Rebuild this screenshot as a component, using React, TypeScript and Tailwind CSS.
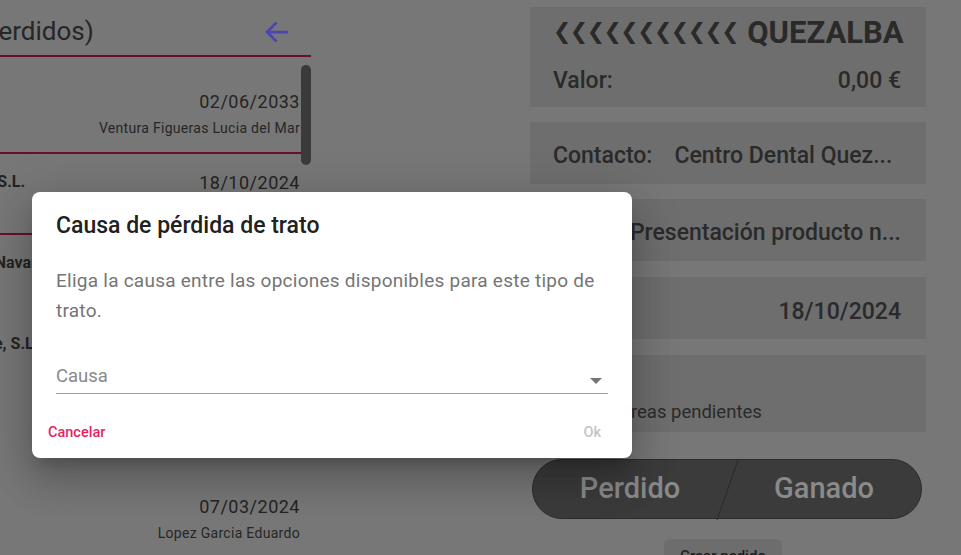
import React from "react";

type Deal = {
  name: string;
  date: string;
  contact: string;
  divider: boolean;
};

const deals: Deal[] = [
  { name: "", date: "02/06/2033", contact: "Ventura Figueras Lucia del Mar", divider: true },
  { name: "Clinica Dental Roca S.L.", date: "18/10/2024", contact: "Martinez Pons Andres", divider: true },
  { name: "Suministros Dental Navarro", date: "21/05/2024", contact: "Navarro Vidal Jorge", divider: false },
  { name: "Ortodoncias Levante, S.L.", date: "12/04/2024", contact: "Ruiz Soler Marta", divider: false },
  { name: "", date: "28/03/2024", contact: "Sanchez Gil Pedro", divider: false },
  { name: "", date: "07/03/2024", contact: "Lopez Garcia Eduardo", divider: false },
];

function DealRow({ deal }: { deal: Deal }) {
  return (
    <div
      className={`h-[81px] pt-4 pr-[11px] pl-[54px] ${
        deal.divider ? "border-b-2 border-[#6a0f2b]" : ""
      }`}
    >
      <div className="flex h-6 items-center justify-between">
        <span className="whitespace-nowrap text-[16px] font-bold text-[#242424]">{deal.name}</span>
        <span className="text-[18px] tracking-[0.5px] text-[#242424]">{deal.date}</span>
      </div>
      <div className="mt-[5px] flex h-5 items-center justify-end">
        <span className="text-[14px] tracking-[0.3px] text-[#262626]">{deal.contact}</span>
      </div>
    </div>
  );
}

export default function App() {
  return (
    <div className="relative h-[555px] w-[961px] overflow-hidden bg-[#777777] font-['Roboto',sans-serif]">
      <div className="flex">
        {/* Lista de tratos */}
        <div className="-ml-[200px] w-[511px] shrink-0">
          <div className="flex h-[57px] items-center justify-between border-b-2 border-[#6a0f2b] pt-[8px] pr-[19px] pl-[95px]">
            <span className="text-[26px] text-[#262626]">Tratos (perdidos)</span>
            <svg width="30" height="30" viewBox="0 0 24 24" fill="none" stroke="#4b45b4" strokeWidth="2.2" strokeLinecap="round" strokeLinejoin="round">
              <path d="M20 12H4" />
              <path d="M11 5l-7 7 7 7" />
            </svg>
          </div>
          <div className="relative pt-4">
            {deals.map((d, i) => (
              <DealRow key={i} deal={d} />
            ))}
            <div className="absolute right-0 top-2 h-[100px] w-[10px] rounded-full bg-[#3b3b3b]" />
          </div>
        </div>

        {/* Detalle */}
        <div className="ml-[219px] flex w-[396px] shrink-0 flex-col pt-[7px]">
          <div className="h-[100px] bg-[#6e6e6e] px-[23px] pt-[6px]">
            <div className="flex h-[38px] items-center text-[31px] font-bold leading-none text-[#2a2a2a]">
              <span className="font-['DejaVu_Sans',sans-serif] text-[22px] tracking-[-1.6px]">❮❮❮❮❮❮❮❮❮❮❮</span>
              <span className="ml-[9px]">QUEZALBA</span>
            </div>
            <div className="mt-[13px] flex items-center justify-between pr-[2px] text-[23px] font-medium text-[#2a2a2a]">
              <span>Valor:</span>
              <span>0,00 €</span>
            </div>
          </div>
          <div className="mt-[15px] flex h-[62px] items-center gap-[22px] bg-[#6e6e6e] px-[23px] pt-[6px] text-[23px] font-medium text-[#2a2a2a]">
            <span>Contacto:</span>
            <span className="truncate">Centro Dental Quez...</span>
          </div>
          <div className="mt-[15px] flex h-[62px] items-center justify-end bg-[#6e6e6e] px-[25px] pt-[6px] text-[23px] font-medium text-[#2a2a2a]">
            <span className="truncate">Presentación producto n...</span>
          </div>
          <div className="mt-[16px] flex h-[62px] items-center justify-between bg-[#6e6e6e] px-[25px] pt-[8px] text-[23px] font-medium text-[#2a2a2a]">
            <span>Fecha:</span>
            <span>18/10/2024</span>
          </div>
          <div className="mt-[16px] flex h-[77px] flex-col justify-end bg-[#6e6e6e] px-[23px] pb-[5px] text-[#2a2a2a]">
            <span className="text-[18px] font-medium">Tareas</span>
            <span className="mt-[6px] text-[18.5px]">No hay tareas pendientes</span>
          </div>
          <div className="relative mt-[27px] ml-[2px] flex h-[60px] w-[390px] items-center rounded-full border border-[#2c2c2c] bg-[#3b3b3b] text-[29px] font-medium text-[#8a8a8a]">
            <span className="flex-1 text-center">Perdido</span>
            <span className="flex-1 text-center">Ganado</span>
            <svg className="absolute left-[183px] top-0" width="24" height="60" viewBox="0 0 24 60">
              <line x1="22" y1="0" x2="1" y2="60" stroke="#2a2a2a" strokeWidth="1" />
            </svg>
          </div>
          <div className="mt-[20px] flex justify-center pr-[10px]">
            <div className="rounded-md bg-[#6d6d6d] px-4 pt-[6px] text-[15px] font-medium text-[#202020]">
              Crear pedido
            </div>
          </div>
        </div>
      </div>

      {/* Diálogo */}
      <div className="absolute left-[32px] top-[192px] flex h-[266px] w-[600px] flex-col rounded-[8px] bg-white shadow-[0_11px_15px_-7px_rgba(0,0,0,0.2),0_24px_38px_3px_rgba(0,0,0,0.14),0_9px_46px_8px_rgba(0,0,0,0.12)]">
        <div className="px-6 pt-[18px] text-[23px] font-medium leading-[32px] text-[#212121]">
          Causa de pérdida de trato
        </div>
        <p className="mt-[24px] px-6 text-[19px] leading-[30px] tracking-[0.25px] text-[#757575]">
          Eliga la causa entre las opciones disponibles para este tipo de trato.
        </p>
        <div className="mx-6 mt-[34px] flex h-[34px] items-center justify-between border-b border-[#9e9e9e] pr-[6px]">
          <span className="pt-[1px] text-[18.5px] text-[#8a8a8a]">Causa</span>
          <svg width="12" height="6" viewBox="0 0 10 5" className="mt-[8px]">
            <path d="M0 0l5 5 5-5z" fill="#757575" />
          </svg>
        </div>
        <div className="mt-[28px] flex items-center justify-between px-4">
          <span className="text-[14.5px] font-medium text-[#e91e63]">Cancelar</span>
          <span className="pr-[15px] text-[14.5px] font-medium text-[#c4c4c4]">Ok</span>
        </div>
      </div>
    </div>
  );
}
